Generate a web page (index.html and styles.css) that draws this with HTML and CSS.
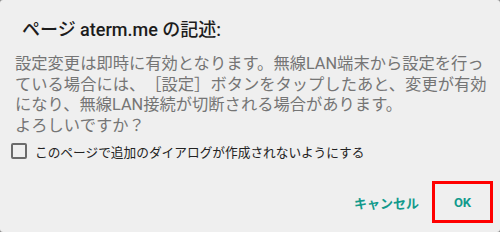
FILE: index.html
```html
<!DOCTYPE html>
<html lang="ja">
<head>
    <meta charset="UTF-8">
    <meta name="viewport" content="width=device-width, initial-scale=1.0">
    <title>ページ aterm.me の記述</title>
    <link rel="stylesheet" href="styles.css">
</head>
<body>
    <div class="dialog">
        <h1 class="dialog-title">ページ aterm.me の記述:</h1>

        <p class="dialog-message">設定変更は即時に有効となります。無線LAN端末から設定を行っている場合には、［設定］ボタンをタップしたあと、変更が有効になり、無線LAN接続が切断される場合があります。<br>よろしいですか？</p>

        <label class="suppress">
            <input type="checkbox" id="suppressDialogs">
            <span class="box"></span>
            このページで追加のダイアログが作成されないようにする
        </label>

        <div class="button-group">
            <button class="btn" id="cancelBtn">キャンセル</button>
            <button class="btn btn-ok" id="okBtn">OK</button>
        </div>
    </div>
</body>
</html>
```

FILE: styles.css
```css
:root {
    --bg-dialog: #efefef;
    --bg-outside: #8a8a8a;
    --text-title: #1c1c1c;
    --text-message: #757575;
    --text-label: #222;
    --accent-color: #129a8c;
    --mark-color: #f00;
}

html {
    background-color: var(--bg-outside);
}

body {
    margin: 0;
    font-family: Roboto, "Noto Sans CJK JP", sans-serif;
    text-spacing-trim: space-all;
}

.dialog {
    height: 232px;
    box-sizing: border-box;
    background-color: var(--bg-dialog);
    border-radius: 3px;
    display: flex;
    flex-direction: column;
}

.dialog-title {
    margin: 18px 0 0 22px;
    font-size: 18px;
    line-height: 24px;
    font-weight: 500;
    color: var(--text-title);
}

.dialog-message {
    margin: 12px 0 0;
    padding: 0 5px 0 15px;
    font-size: 16.3px;
    line-height: 20.5px;
    color: var(--text-message);
}

.suppress {
    display: flex;
    align-items: center;
    gap: 8px;
    margin: 3px 0 0 11px;
    height: 24px;
    font-size: 12.7px;
    color: var(--text-label);
}

.suppress input {
    display: none;
}

.suppress .box {
    width: 16px;
    height: 16px;
    box-sizing: border-box;
    border: 2px solid #6b6b6b;
    border-radius: 2px;
}

.button-group {
    margin-top: auto;
    margin-bottom: 9px;
    padding-right: 7px;
    display: flex;
    justify-content: flex-end;
    align-items: center;
    gap: 13px;
}

.btn {
    background: none;
    border: none;
    padding: 0;
    font-family: inherit;
    font-size: 13px;
    font-weight: bold;
    color: var(--accent-color);
    cursor: pointer;
}

.btn-ok {
    width: 61px;
    height: 42px;
    box-sizing: border-box;
    border: 3px solid var(--mark-color);
}
```
